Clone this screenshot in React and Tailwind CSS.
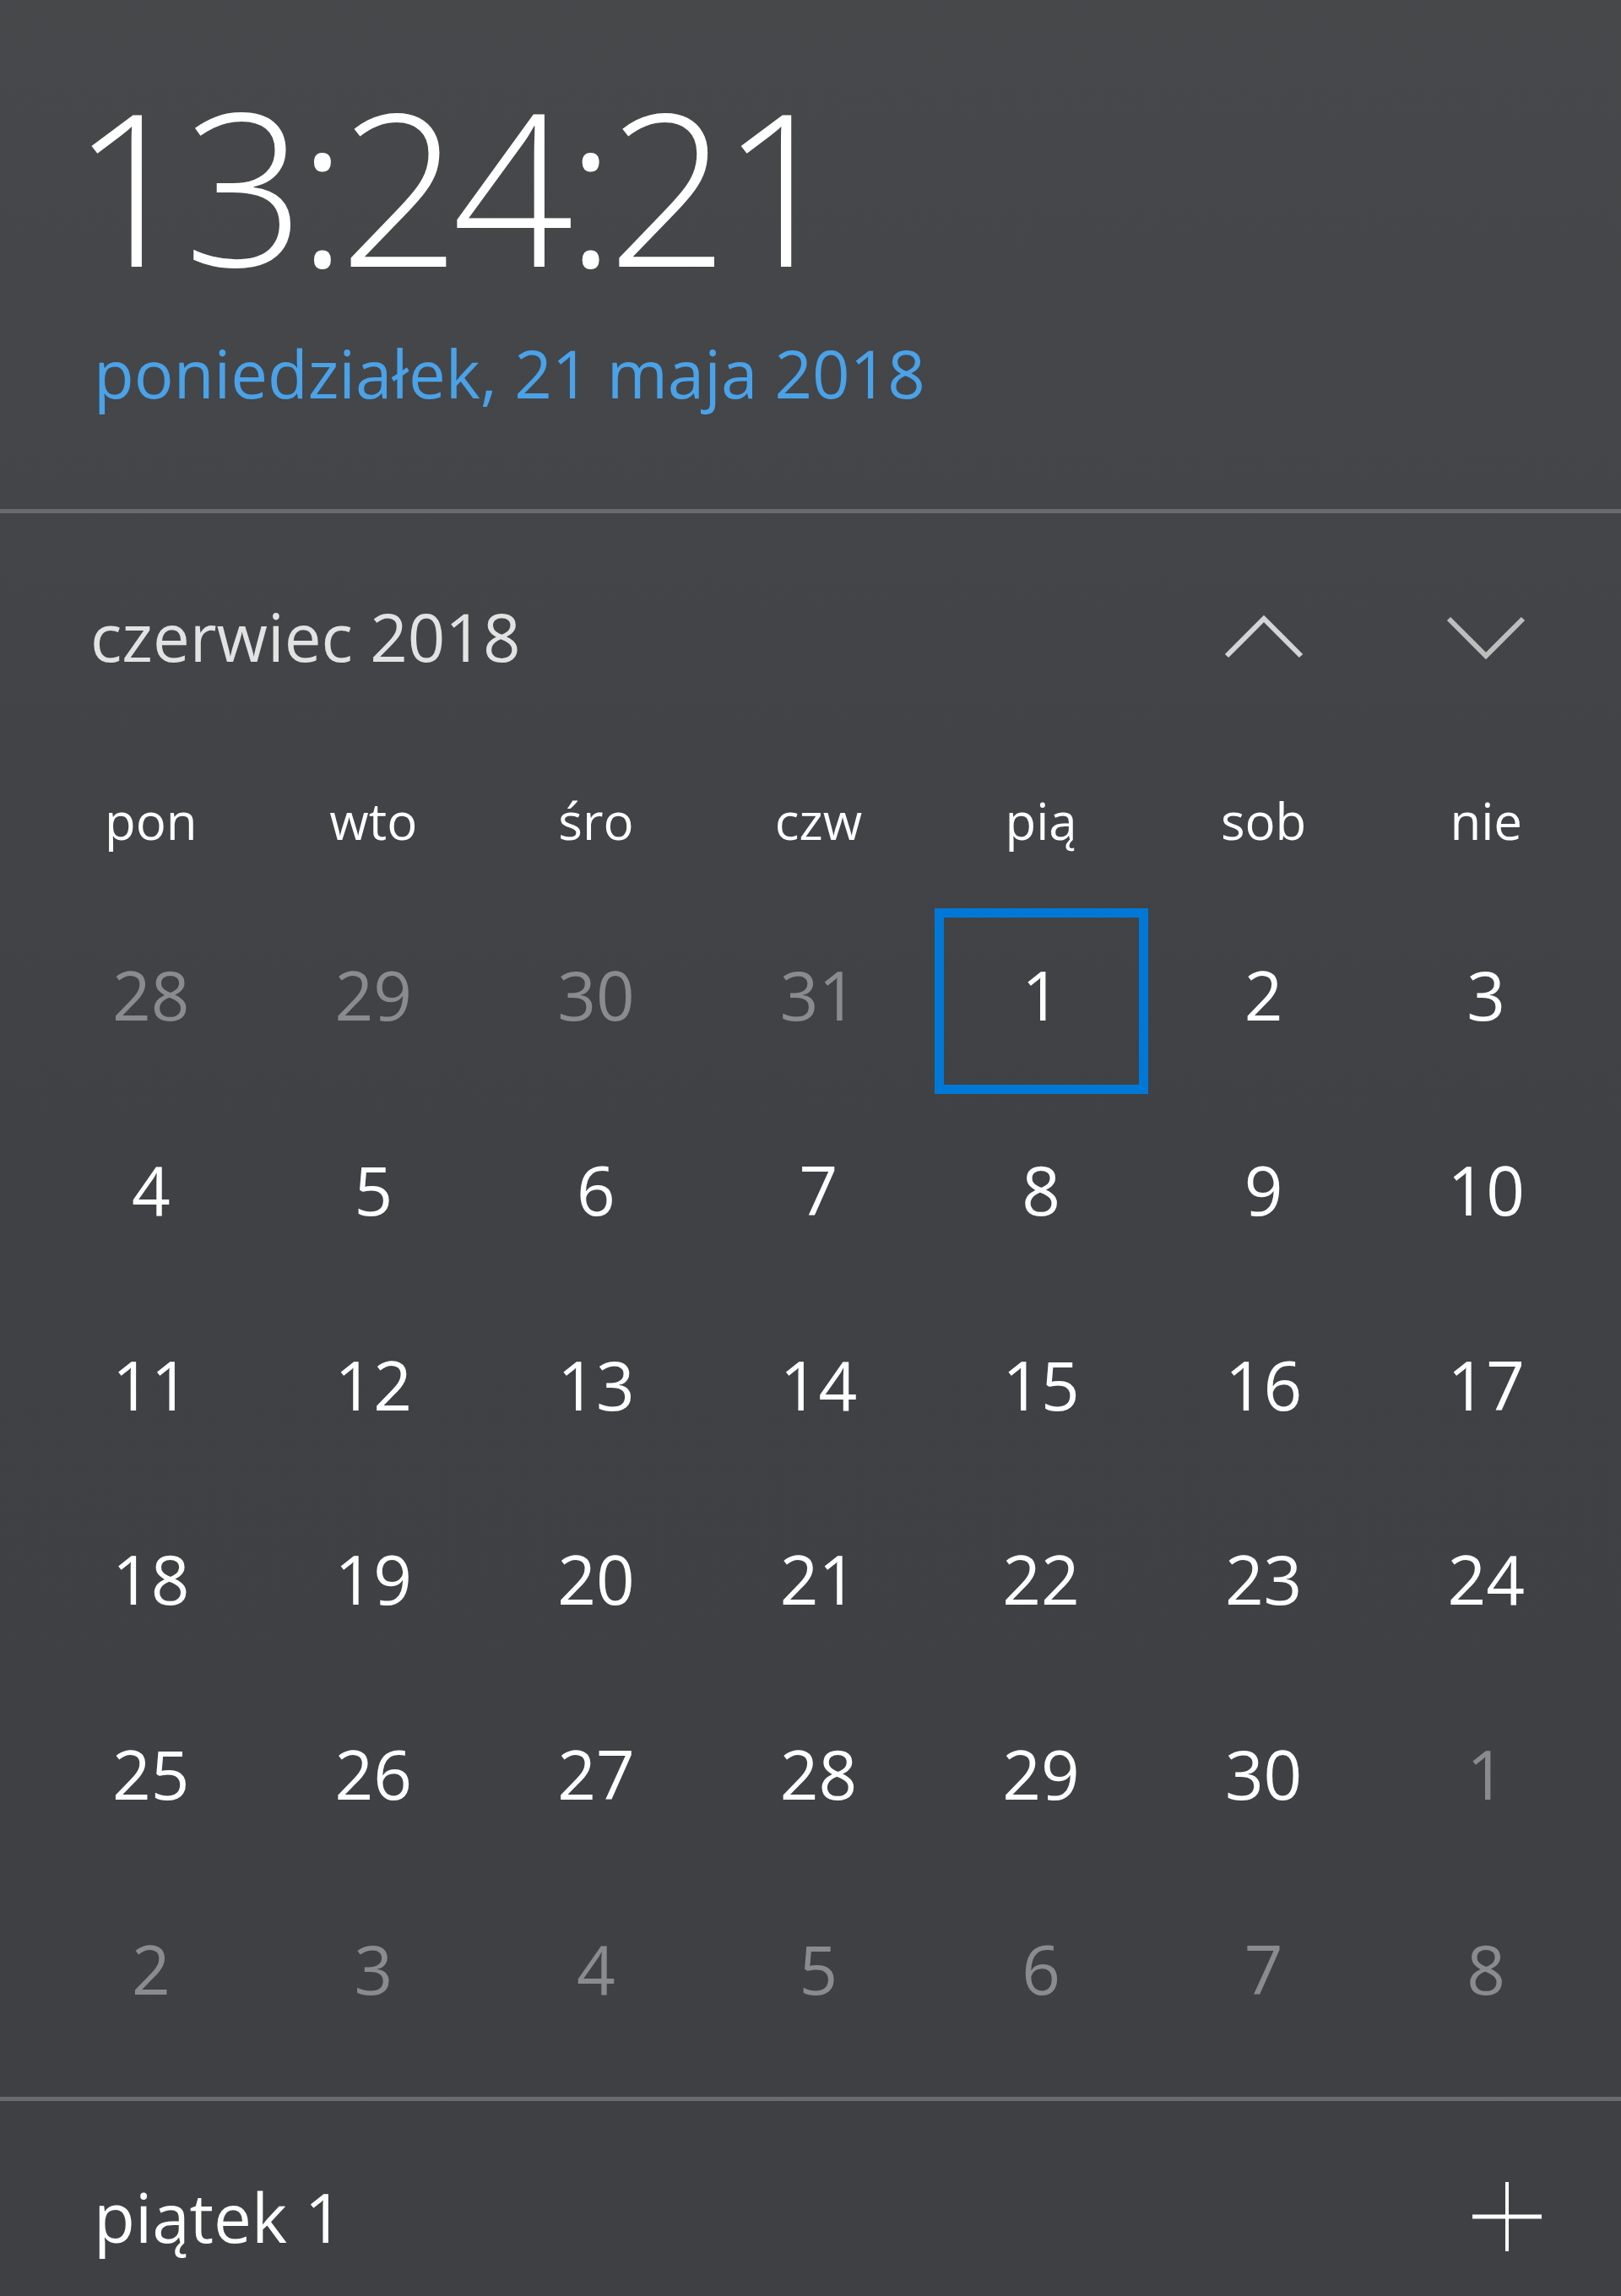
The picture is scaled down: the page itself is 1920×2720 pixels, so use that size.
const weekdays = ["pon", "wto", "śro", "czw", "pią", "sob", "nie"]

const days = [
  [28, true], [29, true], [30, true], [31, true], [1, false], [2, false], [3, false],
  [4, false], [5, false], [6, false], [7, false], [8, false], [9, false], [10, false],
  [11, false], [12, false], [13, false], [14, false], [15, false], [16, false], [17, false],
  [18, false], [19, false], [20, false], [21, false], [22, false], [23, false], [24, false],
  [25, false], [26, false], [27, false], [28, false], [29, false], [30, false], [1, true],
  [2, true], [3, true], [4, true], [5, true], [6, true], [7, true], [8, true],
]

const ChevronUp = () => (
  <svg width="100" height="60" viewBox="0 0 100 60" fill="none">
    <polyline points="6,53 50,9 94,53" stroke="#d4d4d4" strokeWidth="6" />
  </svg>
)

const ChevronDown = () => (
  <svg width="100" height="60" viewBox="0 0 100 60" fill="none">
    <polyline points="6,9 50,53 94,9" stroke="#bdbdbd" strokeWidth="6" />
  </svg>
)

const Plus = () => (
  <svg width="84" height="84" viewBox="0 0 84 84" fill="none">
    <line x1="42" y1="1" x2="42" y2="83" stroke="#ffffff" strokeWidth="4" />
    <line x1="1" y1="42" x2="83" y2="42" stroke="#ffffff" strokeWidth="5" />
  </svg>
)

const App = () => {
  return (
    <div className="w-[1920px] h-[2720px] overflow-hidden bg-linear-to-b from-[#47484a] via-[#3f4145] to-[#3e4044] font-['Open_Sans','Noto_Sans',sans-serif]">
      {/* clock */}
      <div className="h-[603px] pt-[93px] pl-[84px]">
        <div className="text-[252px] leading-none font-light text-white tracking-[-10px]">13:24:21</div>
        <div className="mt-[58px] pl-[27px] text-[78px] leading-none text-[#4aa2e8]">poniedziałek, 21 maja 2018</div>
      </div>
      <div className="h-[5px] bg-[#6a6b6e]" />

      {/* month header */}
      <div className="ml-[47px] w-[1845px] grid grid-cols-7 items-center mt-[107px] h-[78px]">
        <div className="col-span-5 pl-[60px] text-[78px] leading-none text-[#e2e2e2]">czerwiec 2018</div>
        <div className="flex justify-center">
          <ChevronUp />
        </div>
        <div className="flex justify-center">
          <ChevronDown />
        </div>
      </div>

      {/* weekdays */}
      <div className="ml-[47px] w-[1845px] grid grid-cols-7 mt-[149px]">
        {weekdays.map((d) => (
          <div key={d} className="text-center text-[60px] leading-none text-white">
            {d}
          </div>
        ))}
      </div>

      {/* days */}
      <div className="ml-[47px] w-[1845px] grid grid-cols-7 mt-[69px]">
        {days.map(([n, dim], i) => (
          <div key={i} className="h-[230.7px] flex items-center justify-center">
            <div
              className={`w-[253px] h-[220px] flex items-center justify-center pb-[16px] border-[11px] text-[80px] leading-none ${
                i === 4 ? "border-[#0078d7]" : "border-transparent"
              } ${dim ? "text-[#8a8b8e]" : "text-white"}`}
            >
              {n}
            </div>
          </div>
        ))}
      </div>

      <div className="h-[5px] bg-[#6a6b6e] mt-[29px]" />

      {/* agenda */}
      <div className="flex items-center justify-between pl-[111px] pr-[93px] mt-[95px]">
        <div className="text-[80px] leading-none text-white">piątek 1</div>
        <Plus />
      </div>
    </div>
  )
}

export default App
